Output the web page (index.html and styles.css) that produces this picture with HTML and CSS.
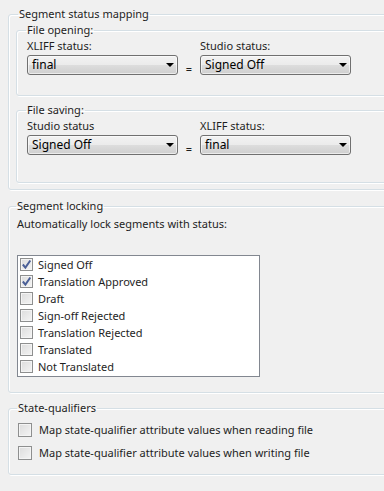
FILE: index.html
```html
<!DOCTYPE html>
<html lang="en">
<head>
<meta charset="UTF-8">
<title>Segment settings</title>
<link rel="stylesheet" href="styles.css">
</head>
<body>

<fieldset class="group group-mapping">
    <legend>Segment status mapping</legend>

    <fieldset class="group inner inner-open">
        <legend>File opening:</legend>
        <div class="map-row">
            <div class="col">
                <div class="lbl">XLIFF status:</div>
                <div class="combo">final<span class="arrow"></span></div>
            </div>
            <div class="eq">=</div>
            <div class="col">
                <div class="lbl">Studio status:</div>
                <div class="combo">Signed Off<span class="arrow"></span></div>
            </div>
        </div>
    </fieldset>

    <fieldset class="group inner inner-save">
        <legend>File saving:</legend>
        <div class="map-row">
            <div class="col">
                <div class="lbl">Studio status</div>
                <div class="combo">Signed Off<span class="arrow"></span></div>
            </div>
            <div class="eq">=</div>
            <div class="col">
                <div class="lbl">XLIFF status:</div>
                <div class="combo">final<span class="arrow"></span></div>
            </div>
        </div>
    </fieldset>
</fieldset>

<fieldset class="group group-locking">
    <legend>Segment locking</legend>
    <div class="hint">Automatically lock segments with status:</div>

    <div class="listbox">
        <div class="item"><span class="cb checked"><svg viewBox="0 0 9 9"><path d="M1.5 4.5 L3.6 7 L7.6 1.2"/></svg></span>Signed Off</div>
        <div class="item"><span class="cb checked"><svg viewBox="0 0 9 9"><path d="M1.5 4.5 L3.6 7 L7.6 1.2"/></svg></span>Translation Approved</div>
        <div class="item"><span class="cb"></span>Draft</div>
        <div class="item"><span class="cb"></span>Sign-off Rejected</div>
        <div class="item"><span class="cb"></span>Translation Rejected</div>
        <div class="item"><span class="cb"></span>Translated</div>
        <div class="item"><span class="cb"></span>Not Translated</div>
    </div>
</fieldset>

<fieldset class="group group-qualifiers">
    <legend>State-qualifiers</legend>
    <div class="opt"><span class="cb"></span>Map state-qualifier attribute values when reading file</div>
    <div class="opt"><span class="cb"></span>Map state-qualifier attribute values when writing file</div>
</fieldset>

</body>
</html>
```

FILE: styles.css
```css
body {
    margin: 0;
    padding: 6px 0 0 8px;
    background-color: #f0f0f0;
    font-family: "Noto Sans", "Open Sans", sans-serif;
    font-size: 11px;
    color: #1e1e1e;
    overflow: hidden;
    width: 384px;
    height: 491px;
    box-sizing: border-box;
}

.group {
    margin: 0;
    min-width: 0;
    width: 420px;
    border: 1px solid #d5dfe5;
    border-radius: 3px;
    box-shadow: inset 1px 1px 0 #fff, 1px 1px 0 #fff;
    box-sizing: border-box;
}

.group legend {
    padding: 0 1px;
    line-height: 16px;
    height: 16px;
}

.group-mapping {
    padding: 0 0 6px 7px;
}

.group-mapping > legend {
    margin-left: 2px;
}

.inner {
    padding: 0 0 18px 10px;
}

.inner > legend {
    margin-left: -1px;
}

.inner-save {
    margin-top: 6px;
    padding-bottom: 25px;
}

.map-row {
    display: flex;
    align-items: flex-start;
}

.lbl {
    line-height: 16px;
    margin-bottom: 1px;
}

.combo {
    position: relative;
    width: 151px;
    height: 20px;
    box-sizing: border-box;
    border: 1px solid #707070;
    border-radius: 3px;
    background: linear-gradient(#f2f2f2, #ebebeb 50%, #dddddd 51%, #cfcfcf);
    box-shadow: inset 0 0 0 1px rgba(255, 255, 255, 0.6);
    padding-left: 4px;
    line-height: 18px;
    color: #000;
    font-size: 12px;
}

.arrow {
    position: absolute;
    right: 3px;
    top: 7px;
    width: 0;
    height: 0;
    border-left: 4px solid transparent;
    border-right: 4px solid transparent;
    border-top: 4px solid #000;
}

.eq {
    width: 22px;
    text-align: center;
    padding-top: 23px;
    line-height: 16px;
}

.group-locking {
    margin-top: 8px;
    padding: 0 0 15px 8px;
}

.group-locking > legend {
    margin-left: -1px;
}

.hint {
    margin-top: 2px;
    line-height: 16px;
}

.listbox {
    margin-top: 23px;
    width: 243px;
    height: 122px;
    box-sizing: border-box;
    border: 1px solid #828790;
    background-color: #fff;
    padding: 0 0 0 2px;
}

.item {
    display: flex;
    align-items: center;
    height: 17px;
    line-height: 17px;
}

.cb {
    display: inline-block;
    width: 13px;
    height: 13px;
    box-sizing: border-box;
    border: 1px solid #8e8f8f;
    background: linear-gradient(135deg, #dcdcdc, #f4f4f4);
    box-shadow: inset 0 0 0 1px #f4f4f4;
    margin-right: 5px;
    flex: none;
}

.cb svg {
    display: block;
    width: 11px;
    height: 11px;
}

.cb path {
    fill: none;
    stroke: #4a5f97;
    stroke-width: 1.6;
}

.group-qualifiers {
    margin-top: 7px;
    padding: 5px 0 13px 9px;
}

.group-qualifiers > legend {
    margin-left: -1px;
}

.opt {
    display: flex;
    align-items: center;
    height: 17px;
}

.opt + .opt {
    margin-top: 6px;
}

.opt .cb {
    width: 14px;
    height: 14px;
    margin-right: 7px;
}
```
